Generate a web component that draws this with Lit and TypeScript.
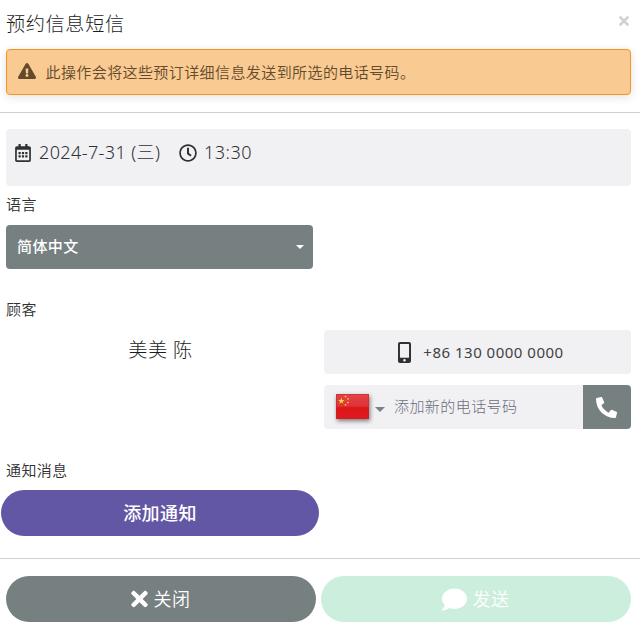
import { LitElement, html, css, svg } from "lit";
import { customElement } from "lit/decorators.js";

const icon = (name: string, viewBox: string, d: string) =>
  html`<svg class="icon ${name}" viewBox=${viewBox} aria-hidden="true">${svg`<path d=${d}></path>`}</svg>`;

const TIMES =
  "M242.72 256l100.07-100.07c12.28-12.28 12.28-32.19 0-44.48l-22.24-22.24c-12.28-12.28-32.19-12.28-44.48 0L176 189.28 75.93 89.21c-12.28-12.28-32.19-12.28-44.48 0L9.21 111.45c-12.28 12.28-12.28 32.19 0 44.48L109.28 256 9.21 356.07c-12.28 12.28-12.28 32.19 0 44.48l22.24 22.24c12.28 12.28 32.2 12.28 44.48 0L176 322.72l100.07 100.07c12.28 12.28 32.2 12.28 44.48 0l22.24-22.24c12.28-12.28 12.28-32.19 0-44.48L242.72 256z";
const WARNING =
  "M569.517 440.013C587.975 472.007 564.806 512 527.94 512H48.054c-36.937 0-59.999-40.055-41.577-71.987L246.423 23.985c18.467-32.009 64.72-31.951 83.154 0l239.94 416.028zM288 354c-25.405 0-46 20.595-46 46s20.595 46 46 46 46-20.595 46-46-20.595-46-46-46zm-43.673-165.346l7.418 136c.347 6.364 5.609 11.346 11.982 11.346h48.546c6.373 0 11.635-4.982 11.982-11.346l7.418-136c.375-6.874-5.098-12.654-11.982-12.654h-63.383c-6.884 0-12.356 5.78-11.981 12.654z";
const CALENDAR =
  "M148 288h-40c-6.600 0-12-5.400-12-12v-40c0-6.600 5.400-12 12-12h40c6.600 0 12 5.400 12 12v40c0 6.600-5.400 12-12 12zm108-12v-40c0-6.600-5.400-12-12-12h-40c-6.600 0-12 5.400-12 12v40c0 6.600 5.400 12 12 12h40c6.600 0 12-5.400 12-12zm96 0v-40c0-6.600-5.400-12-12-12h-40c-6.600 0-12 5.400-12 12v40c0 6.600 5.400 12 12 12h40c6.600 0 12-5.400 12-12zm-96 96v-40c0-6.600-5.400-12-12-12h-40c-6.600 0-12 5.400-12 12v40c0 6.600 5.400 12 12 12h40c6.600 0 12-5.400 12-12zm-96 0v-40c0-6.600-5.400-12-12-12h-40c-6.600 0-12 5.400-12 12v40c0 6.600 5.400 12 12 12h40c6.600 0 12-5.400 12-12zm192 0v-40c0-6.600-5.400-12-12-12h-40c-6.600 0-12 5.400-12 12v40c0 6.600 5.400 12 12 12h40c6.600 0 12-5.400 12-12zm96-260v352c0 26.500-21.500 48-48 48H48c-26.500 0-48-21.500-48-48V112c0-26.500 21.500-48 48-48h48V12c0-6.600 5.400-12 12-12h40c6.600 0 12 5.400 12 12v52h128V12c0-6.600 5.400-12 12-12h40c6.600 0 12 5.400 12 12v52h48c26.500 0 48 21.500 48 48zm-48 346V160H48v298c0 3.300 2.700 6 6 6h340c3.300 0 6-2.700 6-6z";
const CLOCK =
  "M256 8C119 8 8 119 8 256s111 248 248 248 248-111 248-248S393 8 256 8zm0 448c-110.500 0-200-89.500-200-200S145.500 56 256 56s200 89.500 200 200-89.500 200-200 200zm61.800-104.400l-84.900-61.700c-3.100-2.300-4.900-5.900-4.900-9.700V116c0-6.600 5.400-12 12-12h32c6.600 0 12 5.400 12 12v141.700l66.800 48.600c5.400 3.900 6.500 11.400 2.600 16.800L334.600 349c-3.900 5.300-11.400 6.500-16.800 2.600z";
const MOBILE =
  "M272 0H48C21.500 0 0 21.500 0 48v416c0 26.500 21.500 48 48 48h224c26.500 0 48-21.500 48-48V48c0-26.500-21.500-48-48-48zM160 480c-17.700 0-32-14.300-32-32s14.300-32 32-32 32 14.300 32 32-14.300 32-32 32zm112-108c0 6.600-5.400 12-12 12H60c-6.600 0-12-5.400-12-12V60c0-6.600 5.400-12 12-12h200c6.600 0 12 5.400 12 12v312z";
const PHONE =
  "M497.390 361.800l-112-48a24 24 0 0 0-28 6.900l-49.600 60.600A370.660 370.660 0 0 1 130.600 204.110l60.600-49.600a23.940 23.940 0 0 0 6.900-28l-48-112A24.160 24.160 0 0 0 122.600.610l-104 24A24 24 0 0 0 0 48c0 256.500 207.900 464 464 464a24 24 0 0 0 23.400-18.600l24-104a24.290 24.290 0 0 0-14.010-27.600z";
const COMMENT =
  "M256 32C114.600 32 0 125.100 0 240c0 49.600 21.400 95 57 130.700C44.500 421.100 2.700 466 2.200 466.500c-2.200 2.300-2.800 5.700-1.500 8.700S4.800 480 8 480c66.300 0 116-31.800 140.600-51.400 32.700 12.300 69 19.400 107.400 19.400 141.400 0 256-93.100 256-208S397.400 32 256 32z";
const STAR = "M0-1 .225-.309.951-.309.363.118.588.809 0 .382-.588.809-.363.118-.951-.309-.225-.309z";

@customElement("app-root")
export class AppRoot extends LitElement {
  static styles = css`
    :host {
      display: block;
      box-sizing: border-box;
      width: 640px;
      height: 628px;
      overflow: hidden;
      background: #fff;
      color: #2f3031;
      font: 350 15px/20px "IBM Plex Sans", "Noto Sans CJK SC", sans-serif;
      letter-spacing: 0.43px;
    }
    * { box-sizing: border-box; }
    .icon { display: block; flex: none; fill: currentColor; }
    button { border: 0; padding: 0; margin: 0; font: inherit; letter-spacing: inherit; color: #fff; }
    .head { height: 113px; border-bottom: 1px solid #d0d0d2; padding: 0 9px 0 6px; }
    .title-row { display: flex; justify-content: space-between; height: 49px; }
    h1 { margin: 10px 0 0; font-size: 19.2px; font-weight: 300; line-height: 28px; letter-spacing: 0.6px; color: #1c1d1e; }
    .dismiss { width: 10px; height: 10px; margin: 16px 2px 0 0; background: none; color: #d2d2d2; }
    .dismiss .icon { width: 10px; height: 10px; }
    .alert {
      display: flex; align-items: center; height: 46px; padding-left: 11px;
      background: #f9ca92; border: 1px solid #f7941d; border-radius: 4px;
      box-shadow: 0 2px 10px rgba(0, 0, 0, 0.12); color: #644a2b;
    }
    .alert span { padding-top: 1px; letter-spacing: 0.41px; }
    .warning { width: 18px; height: 16px; margin-right: 9.5px; margin-top: -2px; }
    .body { height: 446px; padding: 16px 9px 0 6px; border-bottom: 1px solid #d0d0d2; }
    .when {
      display: flex; align-items: flex-start; height: 57px; padding: 11px 9px;
      background: #f1f1f4; border-radius: 4px;
      font: 300 18px/24px "Noto Sans", "Noto Sans CJK SC", sans-serif; letter-spacing: 0;
    }
    .calendar { width: 16px; height: 18px; margin: 4px 8px 0 0; }
    .clock { width: 18px; height: 18px; margin: 4px 7px 0 0; }
    .date { width: 140px; white-space: nowrap; letter-spacing: 0.4px; }
    .time { letter-spacing: 0.5px; }
    .label { height: 20px; }
    .language { margin-top: 9px; }
    .select {
      display: flex; align-items: center; justify-content: space-between;
      width: 307px; height: 44px; margin-top: 10px; padding: 0 9px 0 11px;
      background: #778081; border-radius: 4px; font-weight: 500;
    }
    .caret { width: 0; height: 0; border: 4px solid transparent; border-top-color: #fff; border-bottom: 0; }
    .customer { margin-top: 31px; }
    .contact { display: grid; grid-template-columns: 307px 307px; column-gap: 11px; margin-top: 10px; }
    .name { padding: 6px 0 0 2px; text-align: center; font-size: 19.2px; font-weight: 300; color: #1c1d1e; line-height: 28px; letter-spacing: 0.6px; }
    .phones { display: grid; row-gap: 11px; }
    .number {
      display: flex; align-items: center; justify-content: center; height: 44px;
      padding-left: 7px; background: #f1f1f4; border-radius: 4px;
      font-family: "Noto Sans", sans-serif; font-size: 15px; font-weight: 400; letter-spacing: 0.5px;
      color: #414243;
    }
    .number .icon { color: #2f3031; }
    .mobile { width: 13px; height: 21px; margin-right: 12px; }
    .add { display: flex; height: 44px; border-radius: 4px; overflow: hidden; background: #f1f1f4; }
    .country { display: flex; align-items: center; padding-left: 12px; width: 70px; }
    .flag { width: 33px; height: 25px; margin-top: -2px; flex: none; filter: drop-shadow(1px 2px 2px rgba(0, 0, 0, 0.5)); }
    .drop { border: 5px solid transparent; border-top: 5px solid #7b7f8b; border-bottom: 0; margin: 4px 0 0 6px; }
    .placeholder { flex: 1; line-height: 43px; font-weight: 300; color: #6b6d7a; }
    .call { display: flex; align-items: center; justify-content: center; width: 48px; padding-right: 1px; background: #778081; }
    .handset { width: 21px; height: 21px; }
    .notice { margin-top: 32px; }
    .notify {
      display: block; width: 318px; height: 46px; margin: 9px 0 0 -5px; border-radius: 23px;
      background: #6257a4; font-size: 18px; font-weight: 500; line-height: 47px;
    }
    .foot { display: grid; grid-template-columns: 310px 310px; column-gap: 5px; padding: 17px 0 0 6px; }
    .foot button {
      display: flex; align-items: center; justify-content: center; height: 46px;
      border-radius: 23px; font-size: 18px; font-weight: 350; letter-spacing: 0.6px;
    }
    .foot span { padding-top: 1px; }
    .close { background: #778081; }
    .close .icon { width: 17px; height: 24px; margin-right: 5px; }
    .send { background: #cceedd; }
    .comment { width: 25px; height: 25px; margin-right: 5px; }
  `;

  render() {
    return html`
      <header class="head">
        <div class="title-row">
          <h1>预约信息短信</h1>
          <button class="dismiss" aria-label="关闭">${icon("x", "0 80 352 352", TIMES)}</button>
        </div>
        <div class="alert" role="alert">
          ${icon("warning", "0 0 576 512", WARNING)}
          <span>此操作会将这些预订详细信息发送到所选的电话号码。</span>
        </div>
      </header>
      <main class="body">
        <div class="when">
          ${icon("calendar", "0 0 448 512", CALENDAR)}<span class="date">2024-7-31 (三)</span>
          ${icon("clock", "0 0 512 512", CLOCK)}<span class="time">13:30</span>
        </div>
        <div class="label language">语言</div>
        <button class="select"><span>简体中文</span><span class="caret"></span></button>
        <div class="label customer">顾客</div>
        <div class="contact">
          <div class="name">美美 陈</div>
          <div class="phones">
            <div class="number">${icon("mobile", "0 0 320 512", MOBILE)}<span>+86 130 0000 0000</span></div>
            <div class="add">
              <div class="country">
                <svg class="flag" viewBox="0 0 33 25">
                  <defs>
                    <linearGradient id="sheen" x2="0" y2="1">
                      <stop offset="0" stop-color="#e14449"></stop>
                      <stop offset=".48" stop-color="#e03337"></stop>
                      <stop offset=".55" stop-color="#dc1519"></stop>
                      <stop offset="1" stop-color="#df1a1e"></stop>
                    </linearGradient>
                  </defs>
                  <rect width="33" height="25" fill="url(#sheen)"></rect>
                  <rect x=".5" y=".5" width="32" height="24" fill="none" stroke="#b9272b" stroke-opacity=".5"></rect>
                  <g fill="#fcdf34">
                    <path transform="translate(5.300 7) scale(3.400)" d=${STAR}></path>
                    <path transform="translate(9.500 2.500) scale(1.300)" d=${STAR}></path>
                    <path transform="translate(12 5) scale(1.300)" d=${STAR}></path>
                    <path transform="translate(12 8.500) scale(1.300)" d=${STAR}></path>
                    <path transform="translate(9.500 11) scale(1.300)" d=${STAR}></path>
                  </g>
                </svg>
                <span class="drop"></span>
              </div>
              <span class="placeholder">添加新的电话号码</span>
              <button class="call" aria-label="电话">${icon("handset", "0 0 512 512", PHONE)}</button>
            </div>
          </div>
        </div>
        <div class="label notice">通知消息</div>
        <button class="notify">添加通知</button>
      </main>
      <footer class="foot">
        <button class="close">${icon("x", "0 0 352 512", TIMES)}<span>关闭</span></button>
        <button class="send">${icon("comment", "0 0 512 512", COMMENT)}<span>发送</span></button>
      </footer>
    `;
  }
}
